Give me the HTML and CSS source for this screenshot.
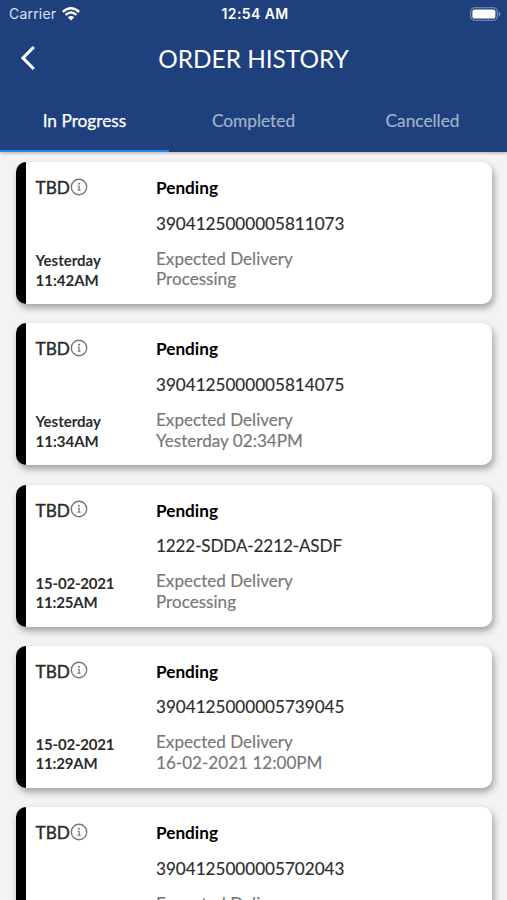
FILE: index.html
```html
<!DOCTYPE html>
<html lang="en">
<head>
<meta charset="utf-8">
<title>Order History</title>
<link rel="stylesheet" href="styles.css">
</head>
<body>
<svg class="defs" width="0" height="0">
  <symbol id="info" viewBox="0 0 18 18">
    <circle cx="9" cy="9" r="7.7" fill="none" stroke="currentColor" stroke-width="1.4"/>
    <circle cx="9" cy="5.7" r="1" fill="currentColor"/>
    <path d="M7.8 8.4H9.1V12M7.6 12.2H10.6" fill="none" stroke="currentColor" stroke-width="1.2"/>
  </symbol>
</svg>
<header class="header">
  <div class="status">
    <div class="carrier"><span>Carrier</span>
      <svg class="wifi" width="18" height="14" viewBox="0 0 18 14">
        <path d="M.8 4.8Q9-2.3 17.2 5M3.6 7.9Q9 3.2 14.4 7.9" fill="none" stroke="#fff" stroke-width="2.4"/>
        <path d="M5.8 10.2Q9 7.6 12.2 10.2L9 13.4Z" fill="#fff"/>
      </svg>
    </div>
    <time class="clock">12:54 AM</time>
    <svg class="battery" width="31" height="14" viewBox="0 0 31 14">
      <rect x=".7" y=".7" width="26.6" height="12.6" rx="4" fill="none" stroke="#7f94bb" stroke-width="1.1"/>
      <rect x="2.4" y="2.4" width="23" height="9.2" rx="2.2" fill="#fff"/>
      <path d="M28.7 4.8Q30.5 5.5 30.5 7T28.7 9.2Z" fill="#7f94bb"/>
    </svg>
  </div>
  <div class="bar">
    <svg class="back" width="16" height="26" viewBox="0 0 16 26"><path d="M14.8 2L4 13L14.8 24" fill="none" stroke="#fff" stroke-width="3.2"/></svg>
    <h1 class="title">ORDER HISTORY</h1>
  </div>
  <nav class="tabs">
    <span class="tab active">In Progress</span>
    <span class="tab">Completed</span>
    <span class="tab">Cancelled</span>
  </nav>
</header>
<main class="list">
  <article class="card">
    <div class="side"><div class="tbd">TBD<svg class="info"><use href="#info"/></svg></div><div class="date">Yesterday<br>11:42AM</div></div>
    <div class="main"><div class="state">Pending</div><div class="number">3904125000005811073</div><div class="delivery">Expected Delivery<br>Processing</div></div>
  </article>
  <article class="card">
    <div class="side"><div class="tbd">TBD<svg class="info"><use href="#info"/></svg></div><div class="date">Yesterday<br>11:34AM</div></div>
    <div class="main"><div class="state">Pending</div><div class="number">3904125000005814075</div><div class="delivery">Expected Delivery<br>Yesterday 02:34PM</div></div>
  </article>
  <article class="card">
    <div class="side"><div class="tbd">TBD<svg class="info"><use href="#info"/></svg></div><div class="date numeric">15-02-2021<br>11:25AM</div></div>
    <div class="main"><div class="state">Pending</div><div class="number mixed">1222-SDDA-2212-ASDF</div><div class="delivery">Expected Delivery<br>Processing</div></div>
  </article>
  <article class="card">
    <div class="side"><div class="tbd">TBD<svg class="info"><use href="#info"/></svg></div><div class="date numeric">15-02-2021<br>11:29AM</div></div>
    <div class="main"><div class="state">Pending</div><div class="number">3904125000005739045</div><div class="delivery">Expected Delivery<br>16-02-2021 12:00PM</div></div>
  </article>
  <article class="card">
    <div class="side"><div class="tbd">TBD<svg class="info"><use href="#info"/></svg></div></div>
    <div class="main"><div class="state">Pending</div><div class="number">3904125000005702043</div><div class="delivery">Expected Delivery</div></div>
  </article>
</main>
</body>
</html>
```
FILE: styles.css
```css
* { box-sizing: border-box; }
body {
  margin: 0;
  height: 900px;
  overflow: hidden;
  display: flex;
  flex-direction: column;
  background: #f3f3f3;
  font-family: Lato, "Liberation Sans", sans-serif;
}
.defs { position: absolute; }
.header {
  flex: none;
  height: 152px;
  background: #1e407c;
  color: #fff;
  box-shadow: 0 1px 3px rgba(0, 0, 0, .3);
}
.status {
  height: 27px;
  display: grid;
  grid-template-columns: 1fr auto 1fr;
  align-items: center;
  padding: 0 6px 0 9px;
  font-family: Inter, sans-serif;
  font-size: 14px;
}
.carrier { display: flex; align-items: center; gap: 6px; color: #dce3ef; letter-spacing: .2px; }
.clock { font-weight: 600; letter-spacing: .4px; }
.battery { justify-self: end; }
.bar {
  height: 62px;
  display: grid;
  grid-template-columns: 40px 1fr 40px;
  align-items: center;
  padding: 0 19px;
}
.title { margin: 2px 0 0; text-align: center; font-size: 24.4px; font-weight: 400; line-height: 30px; }
.tabs { height: 63px; display: grid; grid-template-columns: repeat(3, 1fr); }
.tab {
  text-align: center;
  font-size: 17.3px;
  line-height: 63px;
  height: 63px;
  color: #a5b3cd;
  -webkit-text-stroke: .15px;
  border-bottom: 2px solid transparent;
}
.tab.active { color: #fff; -webkit-text-stroke: .25px; border-color: #2089e8; }
.list {
  flex: none;
  height: 748px;
  overflow: hidden;
  display: flex;
  flex-direction: column;
  gap: 19.3px;
  padding: 10px 15px 0 15.5px;
}
.card {
  flex: none;
  height: 142px;
  display: flex;
  padding: 15px 0 0 10px;
  border-left: 10px solid #000;
  border-radius: 10px;
  background: linear-gradient(#fff, #fff) padding-box;
  box-shadow: 2px 4px 7px rgba(0, 0, 0, .34);
}
.side {
  width: 120.5px;
  height: 113px;
  display: flex;
  flex-direction: column;
  justify-content: space-between;
}
.tbd { display: flex; font-size: 17.2px; line-height: 22px; color: #2c2c2c; -webkit-text-stroke: .4px; }
.info { width: 18px; height: 18px; margin: .5px 0 0 .5px; color: #777; }
.date { font-size: 15px; line-height: 19.5px; font-weight: 700; color: #2c2c2c; }
.date.numeric { letter-spacing: -.2px; }
.state { font-size: 17.2px; line-height: 22px; font-weight: 700; color: #000; }
.number { margin-top: 13.5px; font-size: 17.1px; line-height: 22px; color: #2c2c2c; -webkit-text-stroke: .15px; }
.number.mixed { letter-spacing: -.13px; }
.delivery { margin-top: 14px; font-size: 17.1px; line-height: 20.7px; color: #777; -webkit-text-stroke: .15px; }
```
